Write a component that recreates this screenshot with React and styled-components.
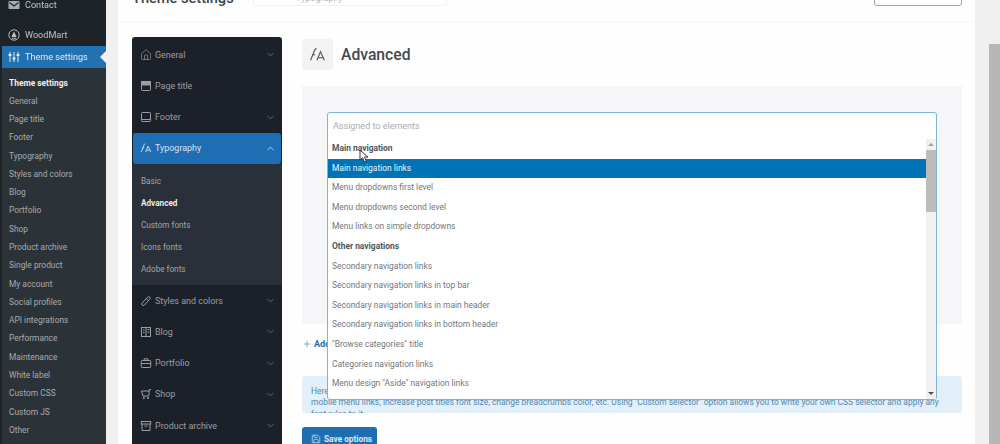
import React from "react";
import styled, { createGlobalStyle } from "styled-components";
import { ChevronDown, ChevronUp, Home, Plus, Save } from "lucide-react";

const GlobalStyle = createGlobalStyle`
  html, body { margin: 0; padding: 0; background: #f0f0f1; overflow: hidden; }
  body { font-family: Roboto, "Liberation Sans", sans-serif; }
`;

const Shell = styled.div`
  display: flex;
  width: 1000px;
  height: 444px;
  overflow: hidden;
  filter: blur(0.4px);
`;

/* wp admin menu */
const AdminMenu = styled.aside`
  flex: 0 0 106px;
  padding-left: 2px;
  box-sizing: border-box;
  background: #1d2327;
  margin-top: -6px;
`;

const AdminItem = styled.div`
  position: relative;
  display: flex;
  align-items: center;
  gap: 5px;
  height: 22px;
  padding-left: 6px;
  font-size: 9.1px;
  white-space: nowrap;
  color: ${(p) => (p.$active ? "#dfeaf4" : "#bfc3c7")};
  background: ${(p) => (p.$active ? "#2271b1" : "transparent")};
  margin-top: ${(p) => p.$gap || 0}px;

  svg {
    flex: 0 0 12px;
  }
`;

const ActiveArrow = styled.span`
  position: absolute;
  right: 0;
  top: 5px;
  border: 6px solid transparent;
  border-left: 0;
  border-right-color: #f0f0f1;
`;

const AdminSub = styled.ul`
  list-style: none;
  margin: 0;
  padding: 5.5px 0 20px;
  background: #2c3338;
`;

const AdminSubItem = styled.li`
  height: 18.29px;
  line-height: 18.29px;
  padding-left: 7px;
  font-size: 8.4px;
  font-weight: ${(p) => (p.$current ? 700 : 400)};
  color: ${(p) => (p.$current ? "#f0f0f0" : "#a5abb0")};
  white-space: nowrap;
`;

/* page area */
const Content = styled.main`
  flex: 1;
  display: flex;
  padding-left: 12px;
  min-width: 0;
`;

const Card = styled.div`
  flex: 0 0 857px;
  min-width: 0;
  height: 480px;
  margin-top: -14px;
  background: #fefefe;
`;

const PageHeader = styled.header`
  display: flex;
  align-items: flex-end;
  height: 36px;
  padding: 0 13px 15px 14px;
  box-sizing: border-box;
  border-bottom: 1px solid #f6f6f7;
`;

const PageTitle = styled.h1`
  flex: 0 0 121px;
  margin: 0 0 -2px;
  font-size: 14.6px;
  line-height: 20px;
  font-weight: 500;
  color: #3c434a;
`;

const SearchBox = styled.div`
  width: 194px;
  height: 20px;
  padding: 2px 0 0 42px;
  border: 1px solid #f2f2f3;
  border-radius: 3px;
  box-sizing: border-box;
  font-size: 9px;
  line-height: 18px;
  color: #b4b6b9;
`;

const HeaderButton = styled.div`
  width: 88px;
  height: 20px;
  margin-left: auto;
  border: 1px solid #8fa9c4;
  border-radius: 3px;
  box-sizing: border-box;
`;

const Layout = styled.div`
  display: flex;
  gap: 20px;
  padding: 15px 13px 0 14px;
`;

/* theme settings nav */
const SideNav = styled.nav`
  flex: 0 0 150px;
  height: 420px;
  padding-top: 2px;
  box-sizing: border-box;
  background: #1c2129;
  border-radius: 3px 3px 0 0;
`;

const NavRow = styled.div`
  display: flex;
  align-items: center;
  height: 31.25px;
  box-sizing: border-box;
  padding: 0 ${(p) => (p.$active ? 5.5 : 6.5)}px 0 ${(p) => (p.$active ? 7 : 8)}px;
  margin: 0 ${(p) => (p.$active ? 1 : 0)}px;
  font-size: 8.95px;
  color: ${(p) => (p.$active ? "#d5e4f2" : "#9a9ea3")};
  background: ${(p) => (p.$active ? "#1f6db3" : "transparent")};
  border-radius: ${(p) => (p.$active ? 3 : 0)}px;
`;

const NavIcon = styled.span`
  display: flex;
  align-items: center;
  flex: 0 0 15px;
`;

const NavLabel = styled.span`
  flex: 1;
  white-space: nowrap;
`;

const NavSub = styled.div`
  padding: 6px 0 5px;
  background: #2a3039;
`;

const NavSubItem = styled.div`
  height: 22px;
  line-height: 22px;
  padding-left: 9px;
  font-size: 8.2px;
  font-weight: ${(p) => (p.$current ? 700 : 400)};
  color: ${(p) => (p.$current ? "#e8e9ea" : "#a2a6ab")};
`;

/* advanced section */
const Section = styled.section`
  flex: 1;
  min-width: 0;
  padding-top: 2px;
`;

const SectionHead = styled.div`
  display: flex;
  align-items: center;
  gap: 8px;
  height: 31px;
`;

const SectionIcon = styled.div`
  display: flex;
  align-items: center;
  justify-content: center;
  width: 31px;
  height: 31px;
  background: #f3f3f3;
  border-radius: 3px;
  color: #5d6269;
`;

const SectionTitle = styled.h2`
  margin: 0;
  font-size: 15.7px;
  font-weight: 500;
  color: #43494f;
`;

const OptionBox = styled.div`
  position: relative;
  height: 238px;
  margin-top: 16px;
  background: #f6f5f7;
`;

const Dropdown = styled.div`
  position: absolute;
  z-index: 2;
  top: 26px;
  left: 25px;
  width: 610px;
  height: 288px;
  box-sizing: border-box;
  display: flex;
  flex-direction: column;
  background: #fff;
  border: 1px solid #7fb2d8;
  border-radius: 3px;
`;

const SelectInput = styled.div`
  flex: 0 0 24.6px;
  padding-left: 5px;
  line-height: 26px;
  font-size: 9px;
  color: #a9acb0;
`;

const ListWrap = styled.div`
  flex: 1;
  display: flex;
  min-height: 0;
`;

const OptionList = styled.ul`
  flex: 1;
  list-style: none;
  margin: 0;
  padding: 0;
`;

const OptionItem = styled.li`
  height: 19.6px;
  line-height: 19.6px;
  padding-left: 4px;
  font-size: 8.45px;
  white-space: nowrap;
  font-weight: ${(p) => (p.$group ? 700 : 400)};
  color: ${(p) => (p.$selected ? "#e8f3fa" : p.$group ? "#50555a" : "#72777c")};
  background: ${(p) => (p.$selected ? "#0073b7" : "transparent")};
`;

const ListScrollbar = styled.div`
  flex: 0 0 10px;
  display: flex;
  flex-direction: column;
  align-items: center;
  background: #f1f1f1;
`;

const ScrollCaret = styled.span`
  flex: 0 0 11px;
  display: flex;
  align-items: center;
  justify-content: center;

  &::before {
    content: "";
    border: 3px solid transparent;
    ${(p) =>
      p.$down
        ? "border-bottom: 0; border-top-color: #505050;"
        : "border-top: 0; border-bottom-color: #a3a3a3;"}
  }
`;

const ScrollThumb = styled.span`
  flex: 0 0 62px;
  width: 100%;
  background: #bcbcbc;
`;

const ScrollSpace = styled.span`
  flex: 1;
`;

const Cursor = styled.svg`
  position: absolute;
  z-index: 3;
  left: 31px;
  top: 36px;
`;

const AddLink = styled.div`
  display: flex;
  align-items: center;
  gap: 2px;
  height: 20px;
  margin-top: 10px;
  font-size: 9px;
  font-weight: 700;
  color: #2271b1;
`;

const Notice = styled.div`
  height: 37px;
  margin-top: 22px;
  padding: 10px 9px 0;
  box-sizing: border-box;
  overflow: hidden;
  background: #e3eff9;
  border-radius: 3px;
  font-size: 8.43px;
  line-height: 11.3px;
  color: #4f88b4;
`;

const SaveButton = styled.div`
  display: flex;
  align-items: center;
  gap: 3px;
  width: 75px;
  height: 23px;
  margin-top: 14px;
  padding-left: 9px;
  box-sizing: border-box;
  background: #1f6fb0;
  border-radius: 3px;
  font-size: 8.3px;
  font-weight: 700;
  white-space: nowrap;
  color: #dbe9f5;

  svg {
    flex: 0 0 10px;
  }
`;

/* page scrollbar */
const PageGutter = styled.div`
  flex: 0 0 14px;
  background: #f0f0f1;
`;

const PageScrollbar = styled.div`
  flex: 0 0 11px;
  padding-top: 44px;
  background: #efeff0;
`;

const PageThumb = styled.div`
  height: 400px;
  background: #b7b7b7;
`;

const Glyph = ({ size = 12, view = 12, width = 1, children }) => (
  <svg width={size} height={size} viewBox={`0 0 ${view} ${view}`} fill="none" stroke="currentColor" strokeWidth={width}>
    {children}
  </svg>
);

const FontGlyph = ({ size = 12 }) => (
  <Glyph size={size} view={16} width={1.15}>
    <path d="M1.5 13.5 5.6 3.4Q6 2.5 7.2 2.5" />
    <path d="M3 8.2h2.6" />
    <path d="M7.4 13.5 10.8 5.5 14.5 13.5" />
    <path d="M8.6 11h4.6" />
  </Glyph>
);

const PageTitleGlyph = () => (
  <Glyph>
    <rect x="1.5" y="1.5" width="9" height="9" rx="0.8" />
    <rect x="1.5" y="1.5" width="9" height="3.5" fill="currentColor" />
  </Glyph>
);

const FooterGlyph = () => (
  <Glyph>
    <rect x="1.5" y="1.5" width="9" height="9" rx="0.8" />
    <path d="M1.5 8.5h9" />
  </Glyph>
);

const BrushGlyph = () => (
  <Glyph>
    <path d="M2 8.2 7.6 2.2Q8.6 1.2 9.7 2.1 10.7 3.1 9.8 4.2L4.2 10.2Q3.1 11 2.2 10.1 1.3 9.2 2 8.2Z" />
    <path d="M6.3 3.6 8.5 5.6" />
  </Glyph>
);

const BlogGlyph = () => (
  <Glyph>
    <rect x="1.5" y="1.5" width="9" height="9" />
    <path d="M6 1.5v9" />
    <path d="M7.5 3.5h2M7.5 6h2M3 4h1.5M3 6.5h1.5" />
  </Glyph>
);

const CaseGlyph = () => (
  <Glyph>
    <rect x="1.3" y="3.5" width="9.4" height="7" rx="0.8" />
    <path d="M4.2 3.5V1.8h3.6v1.7M1.3 6.5h9.4" />
  </Glyph>
);

const CartGlyph = () => (
  <Glyph>
    <path d="M11 1.5H9.4L8.7 8H3L1.5 3h7.7" />
    <circle cx="3.8" cy="10" r="0.7" />
    <circle cx="8" cy="10" r="0.7" />
  </Glyph>
);

const BoxGlyph = () => (
  <Glyph>
    <rect x="1.3" y="1.5" width="9.4" height="2.5" />
    <path d="M2 4v6.5h8V4M4.5 6h3" />
  </Glyph>
);

const MailGlyph = () => (
  <svg width="12" height="12" viewBox="0 0 12 12">
    <rect x="0.5" y="2" width="11" height="8" rx="0.8" fill="#a9adb0" />
    <path d="M1.5 3.5 6 7l4.5-3.5" fill="none" stroke="#1d2327" strokeWidth="1.1" />
  </svg>
);

const WoodmartLogo = () => (
  <Glyph width={0.9}>
    <circle cx="6" cy="6" r="5.2" />
    <path d="M6 2.5 8.6 8H3.4Z" fill="currentColor" stroke="none" />
    <path d="M4 9.3h4" />
  </Glyph>
);

const SlidersGlyph = () => (
  <svg width="12" height="12" viewBox="0 0 12 12" stroke="#f0f5fa" fill="none">
    <path d="M2 1v10M6 1v10M10 1v10" strokeWidth="0.9" />
    <path d="M0.6 4h2.8M4.6 7.5h2.8M8.6 4h2.8" strokeWidth="2.2" />
  </svg>
);

const adminLinks = [
  "General", "Page title", "Footer", "Typography", "Styles and colors", "Blog", "Portfolio",
  "Shop", "Product archive", "Single product", "My account", "Social profiles", "API integrations",
  "Performance", "Maintenance", "White label", "Custom CSS", "Custom JS", "Other",
];

const options = [
  { label: "Main navigation", group: true },
  { label: "Main navigation links", selected: true },
  { label: "Menu dropdowns first level" },
  { label: "Menu dropdowns second level" },
  { label: "Menu links on simple dropdowns" },
  { label: "Other navigations", group: true },
  { label: "Secondary navigation links" },
  { label: "Secondary navigation links in top bar" },
  { label: "Secondary navigation links in main header" },
  { label: "Secondary navigation links in bottom header" },
  { label: "\"Browse categories\" title" },
  { label: "Categories navigation links" },
  { label: "Menu design \"Aside\" navigation links" },
];

const NavEntry = ({ icon, label, noArrow }) => (
  <NavRow>
    <NavIcon>{icon}</NavIcon>
    <NavLabel>{label}</NavLabel>
    {!noArrow && <ChevronDown size={11} strokeWidth={1.5} color="#7f8489" />}
  </NavRow>
);

export default function App() {
  return (
    <Shell>
      <GlobalStyle />
      <AdminMenu>
        <AdminItem>
          <MailGlyph />
          Contact
        </AdminItem>
        <AdminItem $gap={8}>
          <WoodmartLogo />
          WoodMart
        </AdminItem>
        <AdminItem $active>
          <SlidersGlyph />
          Theme settings
          <ActiveArrow />
        </AdminItem>
        <AdminSub>
          <AdminSubItem $current>Theme settings</AdminSubItem>
          {adminLinks.map((name) => (
            <AdminSubItem key={name}>{name}</AdminSubItem>
          ))}
        </AdminSub>
      </AdminMenu>

      <Content>
        <Card>
          <PageHeader>
            <PageTitle>Theme settings</PageTitle>
            <SearchBox>Typography</SearchBox>
            <HeaderButton />
          </PageHeader>

          <Layout>
            <SideNav>
              <NavEntry icon={<Home size={12} strokeWidth={1.3} />} label="General" />
              <NavEntry icon={<PageTitleGlyph />} label="Page title" noArrow />
              <NavEntry icon={<FooterGlyph />} label="Footer" />
              <NavRow $active>
                <NavIcon>
                  <FontGlyph />
                </NavIcon>
                <NavLabel>Typography</NavLabel>
                <ChevronUp size={11} strokeWidth={1.8} />
              </NavRow>
              <NavSub>
                <NavSubItem>Basic</NavSubItem>
                <NavSubItem $current>Advanced</NavSubItem>
                <NavSubItem>Custom fonts</NavSubItem>
                <NavSubItem>Icons fonts</NavSubItem>
                <NavSubItem>Adobe fonts</NavSubItem>
              </NavSub>
              <NavEntry icon={<BrushGlyph />} label="Styles and colors" />
              <NavEntry icon={<BlogGlyph />} label="Blog" />
              <NavEntry icon={<CaseGlyph />} label="Portfolio" />
              <NavEntry icon={<CartGlyph />} label="Shop" />
              <NavEntry icon={<BoxGlyph />} label="Product archive" />
            </SideNav>

            <Section>
              <SectionHead>
                <SectionIcon>
                  <FontGlyph size={17} />
                </SectionIcon>
                <SectionTitle>Advanced</SectionTitle>
              </SectionHead>

              <OptionBox>
                <Dropdown>
                  <SelectInput>Assigned to elements</SelectInput>
                  <ListWrap>
                    <OptionList>
                      {options.map((o) => (
                        <OptionItem key={o.label} $group={o.group} $selected={o.selected}>
                          {o.label}
                        </OptionItem>
                      ))}
                    </OptionList>
                    <ListScrollbar>
                      <ScrollCaret />
                      <ScrollThumb />
                      <ScrollSpace />
                      <ScrollCaret $down />
                    </ListScrollbar>
                  </ListWrap>
                  <Cursor width="11" height="14" viewBox="0 0 11 14">
                    <path d="M1 1v10l2.6-2.2L5.4 13l1.9-.8-1.8-4.1H9Z" fill="#fff" stroke="#30343a" strokeWidth="1" />
                  </Cursor>
                </Dropdown>
              </OptionBox>

              <AddLink>
                <Plus size={10} strokeWidth={1.3} />
                Add rule
              </AddLink>

              <Notice>
                Here you can set custom font rules for individual elements of your website, for example:
                <br />
                mobile menu links, increase post titles font size, change breadcrumbs color, etc. Using "Custom selector" option allows you to write your own CSS selector and apply any
                <br />
                font rules to it.
              </Notice>

              <SaveButton>
                <Save size={10} strokeWidth={1.6} />
                Save options
              </SaveButton>
            </Section>
          </Layout>
        </Card>
        <PageGutter />
        <PageScrollbar>
          <PageThumb />
        </PageScrollbar>
      </Content>
    </Shell>
  );
}
